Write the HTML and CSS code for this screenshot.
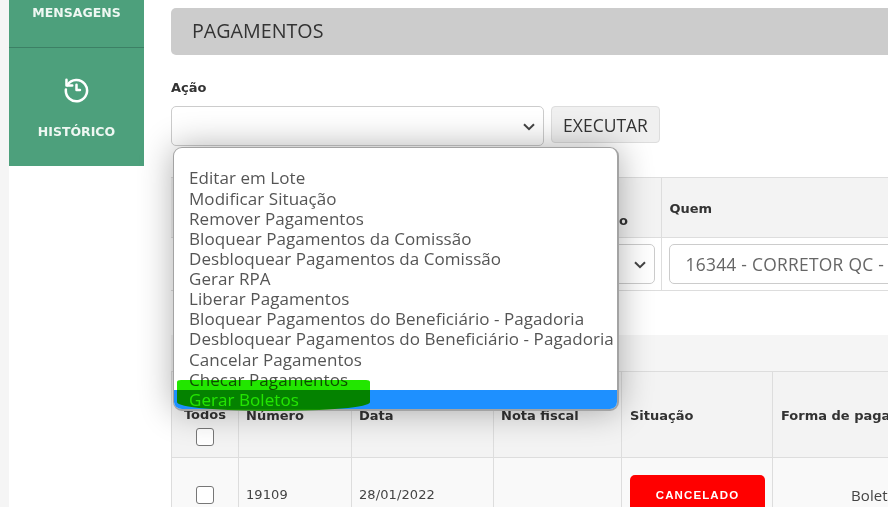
FILE: index.html
```html
<!DOCTYPE html>
<html lang="pt">
<head>
<meta charset="utf-8">
<title>Pagamentos</title>
<link rel="stylesheet" href="styles.css">
</head>
<body>
<div class="page">
  <aside class="sidebar">
    <div class="nav-item nav-cut">MENSAGENS</div>
    <div class="nav-item nav-history">
      <svg class="nav-icon" viewBox="0 0 28 28" width="28" height="28" fill="none" stroke="#fff" stroke-width="2.6" stroke-linecap="round" stroke-linejoin="round">
        <path d="M4.6 9.4A11 11 0 1 1 3 14"/>
        <path d="M3.6 3.8v6h6"/>
        <path d="M14 9v5.6l3.6 0"/>
      </svg>
      <span>HISTÓRICO</span>
    </div>
  </aside>
  <main class="content">
    <h1 class="title">PAGAMENTOS</h1>
    <label class="field-label">Ação</label>
    <div class="action-row">
      <div class="select action-select"><svg class="chev" viewBox="0 0 12 8" width="12" height="8"><path d="M1 1.2l5 5 5-5" fill="none" stroke="#444" stroke-width="2"/></svg></div>
      <button class="run-btn">EXECUTAR</button>
    </div>
    <table class="filter-table">
      <colgroup><col class="f1"><col class="f2"><col class="f3"></colgroup>
      <tr class="head-row"><th></th><th class="low">Situação</th><th class="quem">Quem</th></tr>
      <tr>
        <td></td>
        <td class="pad"><div class="select small"><svg class="chev" viewBox="0 0 12 8" width="12" height="8"><path d="M1 1.2l5 5 5-5" fill="none" stroke="#444" stroke-width="2"/></svg></div></td>
        <td class="pad"><div class="select small who">16344 - CORRETOR QC - MATRIZ SÃO PAULO</div></td>
      </tr>
    </table>
    <div class="band"></div>
    <table class="data-table">
      <colgroup><col class="c1"><col class="c2"><col class="c3"><col class="c4"><col class="c5"><col class="c6"></colgroup>
      <tr class="head-row tall">
        <th class="center todos">Todos<span class="check head-check"></span></th>
        <th class="tight">Número</th><th class="tight">Data</th><th class="tight">Nota fiscal</th><th>Situação</th><th>Forma de pagamento</th>
      </tr>
      <tr class="odd">
        <td class="center"><span class="check"></span></td>
        <td class="tight">19109</td><td class="tight">28/01/2022</td><td></td>
        <td><span class="badge">CANCELADO</span></td>
        <td class="pay">Boleto</td>
      </tr>
    </table>
  </main>
  <div class="menu">
    <div class="menu-item">Editar em Lote</div>
    <div class="menu-item">Modificar Situação</div>
    <div class="menu-item">Remover Pagamentos</div>
    <div class="menu-item">Bloquear Pagamentos da Comissão</div>
    <div class="menu-item">Desbloquear Pagamentos da Comissão</div>
    <div class="menu-item">Gerar RPA</div>
    <div class="menu-item">Liberar Pagamentos</div>
    <div class="menu-item">Bloquear Pagamentos do Beneficiário - Pagadoria</div>
    <div class="menu-item">Desbloquear Pagamentos do Beneficiário - Pagadoria</div>
    <div class="menu-item">Cancelar Pagamentos</div>
    <div class="menu-item">Checar Pagamentos</div>
    <div class="menu-item active">Gerar Boletos</div>
  </div>
  <div class="marker"></div>
</div>
</body>
</html>
```
FILE: styles.css
```css
* { box-sizing: border-box; }
html, body { margin: 0; height: 100%; background: #fff; overflow: hidden; }
.page {
  position: relative;
  width: 888px;
  height: 507px;
  overflow: hidden;
  display: flex;
  align-items: flex-start;
  padding-left: 9px;
  font-family: "DejaVu Sans", Verdana, sans-serif;
  color: #333;
  background: linear-gradient(to right, #f5f5f5 9px, #fff 9px);
}
.sidebar {
  width: 135px;
  height: 166px;
  flex: none;
  background: #4da07c;
  color: #eef7f2;
  font-size: 12.5px;
  font-weight: 700;
  font-family: "DejaVu Sans", Verdana, sans-serif;
  text-align: center;
}
.nav-item { display: flex; flex-direction: column; align-items: center; }
.nav-cut { height: 48px; padding-top: 6px; border-bottom: 1px solid #3c8065; line-height: 14px; }
.nav-history { padding-top: 28px; }
.nav-history span { margin-top: 22px; line-height: 14px; }
.nav-icon { width: 27px; height: 27px; }
.content { width: 800px; margin-left: 27px; padding-top: 8px; flex: none; }
.title {
  margin: 0;
  height: 47px;
  width: 760px;
  background: #ccc;
  border-radius: 5px;
  padding-left: 21px;
  font: 400 19.7px/46px "Open Sans", sans-serif;
  color: #333;
}
.field-label { display: block; margin-top: 25px; font-size: 13px; font-weight: 700; line-height: 16px; color: #333; }
.action-row { display: flex; gap: 7px; margin-top: 10px; align-items: flex-start; }
.select {
  position: relative;
  background: #fff;
  border: 1px solid #ccc;
  border-radius: 5px;
}
.action-select { width: 373px; height: 40px; }
.chev { position: absolute; right: 8px; top: 50%; margin-top: -3px; }
.run-btn {
  width: 109px;
  height: 37px;
  background: #f0f0f0;
  border: 1px solid #ddd;
  border-radius: 4px;
  font: 400 17.5px "Open Sans", sans-serif;
  color: #333;
  padding: 0;
}
table { border-collapse: collapse; table-layout: fixed; font-size: 13px; }
th, td { border: 1px solid #ddd; padding: 0 8px; text-align: left; }
.filter-table { width: 870px; margin-top: 31px; }
.f1 { width: 390px; }
.f2 { width: 100px; }
.f3 { width: 380px; }
.head-row { background: #f3f3f3; height: 60px; }
.filter-table td { height: 53px; }
.filter-table td:first-child, .filter-table th:first-child { border-left: 0; }
.low { padding: 26px 0 0 3px; }
.quem { padding-top: 2px; }
td.pad { padding: 0 6px 0 7px; }
.small { height: 40px; }
.who {
  font: 400 17.4px/38px "Open Sans", sans-serif;
  letter-spacing: 0.27px;
  color: #666;
  padding-left: 16px;
  white-space: nowrap;
  overflow: hidden;
}
.band { height: 36px; margin-top: 44px; width: 800px; background: #f5f5f5; }
.data-table { width: 870px; }
.c1 { width: 67px; }
.c2 { width: 113px; }
.c3 { width: 142px; }
.c4 { width: 128px; }
.c5 { width: 151px; }
.c6 { width: 269px; }
.tall { height: 86px; }
.tall th { vertical-align: middle; padding-top: 2px; }
.tight { padding-left: 7px; }
.center { text-align: center; padding: 0; }
.tall th.todos { vertical-align: top; padding-top: 35px; }
.check {
  display: block;
  width: 18px;
  height: 18px;
  margin: 0 auto;
  background: #fff;
  border: 1px solid #777;
  border-radius: 3px;
}
.head-check { margin-top: 6px; }
.odd { background: #f9f9f9; height: 74px; }
.odd td { font-size: 13px; color: #444; letter-spacing: 0.1px; }
.odd td.pay { text-align: center; padding-right: 74px; font-family: "Open Sans", sans-serif; font-size: 15px; }
.badge {
  display: block;
  width: 135px;
  height: 40px;
  background: #f00;
  border-radius: 5px;
  color: #fff;
  text-align: center;
  font: 700 11.5px/40px "Liberation Sans", Arial, sans-serif;
  letter-spacing: 1.1px;
}
.menu {
  position: absolute;
  left: 173px;
  top: 147px;
  width: 446px;
  height: 264px;
  padding: 20.4px 0 0 0;
  background: #fff;
  border: 2px solid #a3a3a3;
  border-width: 1px 2px 2px 1px;
  border-radius: 9px;
  box-shadow: 0 0 34px rgba(0, 0, 0, .32);
  overflow: hidden;
  font: 400 17px/20.17px "Open Sans", sans-serif;
  letter-spacing: 0.06px;
  color: #555;
}
.menu-item { padding-left: 15px; white-space: nowrap; height: 20.14px; }
.menu-item.active { background: #1e90ff; color: #fff; }
.marker {
  position: absolute;
  left: 177px;
  top: 380px;
  width: 193px;
  height: 31px;
  background: #22e600;
  mix-blend-mode: multiply;
  border-radius: 4px 4px 50% 50% / 2px 2px 28% 28%;
}
```
